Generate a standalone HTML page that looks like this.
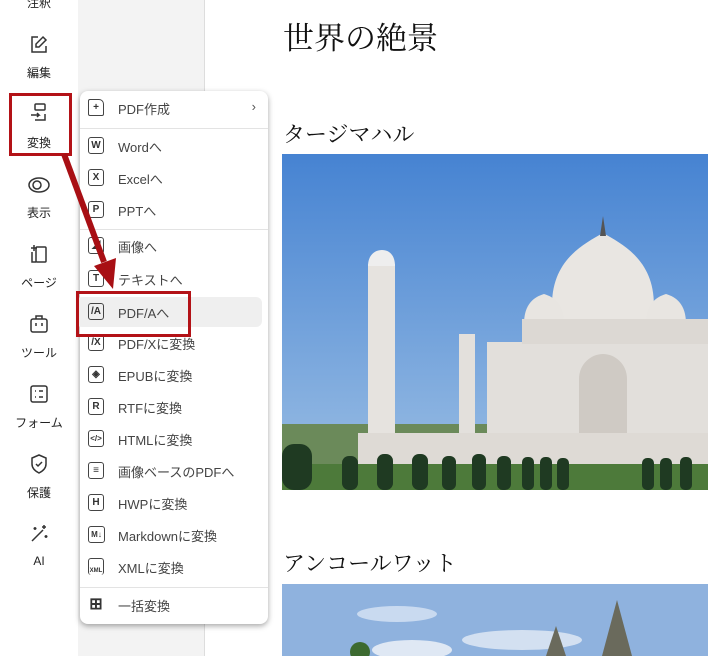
<!DOCTYPE html>
<html><head><meta charset="utf-8"><style>
*{margin:0;padding:0;box-sizing:border-box}
body{width:708px;height:656px;overflow:hidden;background:#fff;position:relative;font-family:"Liberation Sans","Noto Sans CJK JP",sans-serif;color:#222}
.side{position:absolute;left:0;top:0;width:78px;height:656px;background:#fff}
.panel{position:absolute;left:78px;top:0;width:127px;height:656px;background:#f3f3f3;border-right:1px solid #ddd}
.sb{position:absolute;left:0;width:78px;text-align:center;font-size:12px;color:#222}
.sb svg{display:block;margin:0 auto}
.menu{position:absolute;left:80px;top:91px;width:188px;height:533px;background:#fff;border-radius:8px;box-shadow:0 2px 6px rgba(0,0,0,.35)}
.it{position:absolute;left:0;width:188px;height:30px;font-size:13px;color:#444}
.it .ic{position:absolute;left:8px;top:6px;width:16px;height:17px;border:1.6px solid #444;border-radius:3px;font-size:10px;font-weight:bold;display:flex;align-items:center;justify-content:center;color:#333;line-height:1}
.it .t{position:absolute;left:38px;top:6px}
.sep{position:absolute;left:0;width:188px;height:1px;background:#e3e3e3}
.doc{position:absolute;left:283px;font-family:"Liberation Serif","Noto Serif CJK JP",serif;color:#111}
.red{position:absolute;border:3px solid #b31217}
</style></head><body>
<div class="side">
<div class="sb" style="top:-6px">注釈</div>
<div class="sb" style="top:34px"><svg width="22" height="22" viewBox="0 0 22 22" fill="none" stroke="#333" stroke-width="1.5"><path d="M10 3H4v15h14v-6"/><path d="M15 3l3 3-7 7H8v-3z"/></svg></div>
<div class="sb" style="top:64px">編集</div>
<div class="sb" style="top:102px"><svg width="22" height="22" viewBox="0 0 22 22" fill="none" stroke="#333" stroke-width="1.5"><rect x="7" y="2" width="10" height="6" rx="1"/><path d="M17 12v6H7M3 13h8l-2-2M11 13l-2 2"/></svg></div>
<div class="sb" style="top:134px">変換</div>
<div class="sb" style="top:174px"><svg width="24" height="22" viewBox="0 0 24 22" fill="none" stroke="#333" stroke-width="1.5"><ellipse cx="12" cy="11" rx="10" ry="7"/><circle cx="10" cy="11" r="4"/></svg></div>
<div class="sb" style="top:204px">表示</div>
<div class="sb" style="top:243px"><svg width="22" height="22" viewBox="0 0 22 22" fill="none" stroke="#333" stroke-width="1.5"><rect x="8" y="4" width="10" height="15" rx="1"/><path d="M4 9v10h4M6 2v6M3 5h6"/></svg></div>
<div class="sb" style="top:274px">ページ</div>
<div class="sb" style="top:313px"><svg width="22" height="22" viewBox="0 0 22 22" fill="none" stroke="#333" stroke-width="1.5"><rect x="3" y="6" width="16" height="13" rx="2"/><path d="M8 6V3h6v3M8 10v3M14 10v3"/></svg></div>
<div class="sb" style="top:344px">ツール</div>
<div class="sb" style="top:383px"><svg width="22" height="22" viewBox="0 0 22 22" fill="none" stroke="#333" stroke-width="1.5"><rect x="3" y="3" width="16" height="16" rx="2"/><path d="M7 8h1M11 8h4M7 14h1M11 14h4"/></svg></div>
<div class="sb" style="top:414px">フォーム</div>
<div class="sb" style="top:453px"><svg width="22" height="22" viewBox="0 0 22 22" fill="none" stroke="#333" stroke-width="1.5"><path d="M11 2l7 3v6c0 4-3 7-7 9-4-2-7-5-7-9V5z"/><path d="M8 11l2 2 4-4"/></svg></div>
<div class="sb" style="top:484px">保護</div>
<div class="sb" style="top:523px"><svg width="22" height="22" viewBox="0 0 22 22" fill="none" stroke="#333" stroke-width="1.5"><path d="M4 18L15 7"/><path d="M16 2v4M14 4h4M7 4v3M5.5 5.5h3M18 12v3M16.5 13.5h3"/></svg></div>
<div class="sb" style="top:554px">AI</div>
</div>
<div class="panel"></div>

<div class="doc" style="top:13px;font-size:31px">世界の絶景</div>
<div class="doc" style="top:118px;font-size:22px">タージマハル</div>
<div class="doc" style="top:547px;font-size:22px">アンコールワット</div>

<svg style="position:absolute;left:282px;top:154px" width="426" height="336" viewBox="0 0 426 336">
<defs><linearGradient id="sk" x1="0" y1="0" x2="0" y2="1"><stop offset="0" stop-color="#4683d2"/><stop offset="1" stop-color="#9cbfe4"/></linearGradient></defs>
<rect width="426" height="336" fill="url(#sk)"/>
<rect x="0" y="270" width="426" height="66" fill="#6b8a5a"/>
<path d="M271 165 C264 110 298 92 321 79 C344 92 378 110 371 165Z" fill="#e9e6e2"/>
<path d="M318 82 l3 -20 3 20z" fill="#555"/>
<path d="M242 170 c0-20 10-27 20-30 c10 3 20 10 20 30z" fill="#e8e5e1"/>
<path d="M364 170 c0-20 10-27 20-30 c10 3 20 10 20 30z" fill="#e8e5e1"/>
<rect x="205" y="188" width="221" height="91" fill="#e2dfdb"/>
<rect x="240" y="165" width="186" height="25" fill="#dcd8d3"/>
<path d="M297 280 v-55 c0-15 12-25 24-25 c12 0 24 10 24 25 v55z" fill="#cfcac4"/>
<rect x="86" y="110" width="27" height="170" fill="#e6e3df"/>
<path d="M86 112 c0-10 6-16 14-16 c8 0 13 6 13 16z" fill="#eee"/>
<rect x="177" y="180" width="16" height="100" fill="#e3e0dc"/>
<rect x="76" y="279" width="350" height="33" fill="#dedad5"/>
<rect x="0" y="310" width="426" height="26" fill="#4d7a3a"/>
<g fill="#1f3a22"><rect x="60" y="302" width="16" height="34" rx="7"/><rect x="95" y="300" width="16" height="36" rx="7"/><rect x="130" y="300" width="16" height="36" rx="7"/><rect x="160" y="302" width="14" height="34" rx="6"/><rect x="190" y="300" width="14" height="36" rx="6"/><rect x="215" y="302" width="14" height="34" rx="6"/><rect x="240" y="303" width="12" height="33" rx="5"/><rect x="258" y="303" width="12" height="33" rx="5"/><rect x="275" y="304" width="12" height="32" rx="5"/><rect x="360" y="304" width="12" height="32" rx="5"/><rect x="378" y="304" width="12" height="32" rx="5"/><rect x="398" y="303" width="12" height="33" rx="5"/><rect x="0" y="290" width="30" height="46" rx="12"/></g>
</svg>

<svg style="position:absolute;left:282px;top:584px" width="426" height="72" viewBox="0 0 426 72">
<rect width="426" height="72" fill="#8fb2de"/>
<ellipse cx="115" cy="30" rx="40" ry="8" fill="#c9daf0"/>
<ellipse cx="130" cy="66" rx="40" ry="10" fill="#dfe8f4"/>
<ellipse cx="240" cy="56" rx="60" ry="10" fill="#d3e0f1"/>
<path d="M264 72 l10-30 10 30z" fill="#6a6a5c"/><path d="M320 72 l15-56 15 56z" fill="#6a6a5c"/>
<circle cx="78" cy="68" r="10" fill="#3c6a30"/>
</svg>

<div class="menu">
<div class="it" style="top:2px"><span class="ic" style="border-radius:2px 5px 2px 2px">+</span><span class="t">PDF作成</span><span style="position:absolute;right:12px;top:6px;color:#555">›</span></div>
<div class="sep" style="top:37px"></div>
<div class="it" style="top:40px"><span class="ic">W</span><span class="t">Wordへ</span></div>
<div class="it" style="top:72px"><span class="ic">X</span><span class="t">Excelへ</span></div>
<div class="it" style="top:104px"><span class="ic">P</span><span class="t">PPTへ</span></div>
<div class="sep" style="top:138px"></div>
<div class="it" style="top:140px"><span class="ic" style="font-size:9px">◢</span><span class="t">画像へ</span></div>
<div class="it" style="top:173px"><span class="ic">T</span><span class="t">テキストへ</span></div>
<div class="it" style="top:206px;left:-4px;width:186px;background:#efefef;border-radius:6px;height:30px"><span class="ic" style="left:12px">/A</span><span class="t" style="left:42px">PDF/Aへ</span></div>
<div class="it" style="top:237px"><span class="ic">/X</span><span class="t">PDF/Xに変換</span></div>
<div class="it" style="top:269px"><span class="ic">◈</span><span class="t">EPUBに変換</span></div>
<div class="it" style="top:301px"><span class="ic">R</span><span class="t">RTFに変換</span></div>
<div class="it" style="top:333px"><span class="ic" style="font-size:8px">&lt;/&gt;</span><span class="t">HTMLに変換</span></div>
<div class="it" style="top:365px"><span class="ic">≡</span><span class="t">画像ベースのPDFへ</span></div>
<div class="it" style="top:397px"><span class="ic">H</span><span class="t">HWPに変換</span></div>
<div class="it" style="top:429px"><span class="ic" style="font-size:8px;width:17px">M↓</span><span class="t">Markdownに変換</span></div>
<div class="it" style="top:461px"><span class="ic" style="font-size:6px;align-items:flex-end;padding-bottom:1px;border-bottom:none">XML</span><span class="t">XMLに変換</span></div>
<div class="sep" style="top:496px"></div>
<div class="it" style="top:499px"><span class="ic" style="border:none;font-size:16px">⊞</span><span class="t">一括変換</span></div>
</div>

<div class="red" style="left:9px;top:93px;width:63px;height:63px"></div>
<div class="red" style="left:76px;top:291px;width:115px;height:46px"></div>
<svg style="position:absolute;left:0;top:0" width="708" height="656"><path d="M64 154 L104 262" stroke="#a80f14" stroke-width="6"/><path d="M94 266 L113 289 L116 258z" fill="#a80f14"/></svg>
</body></html>
